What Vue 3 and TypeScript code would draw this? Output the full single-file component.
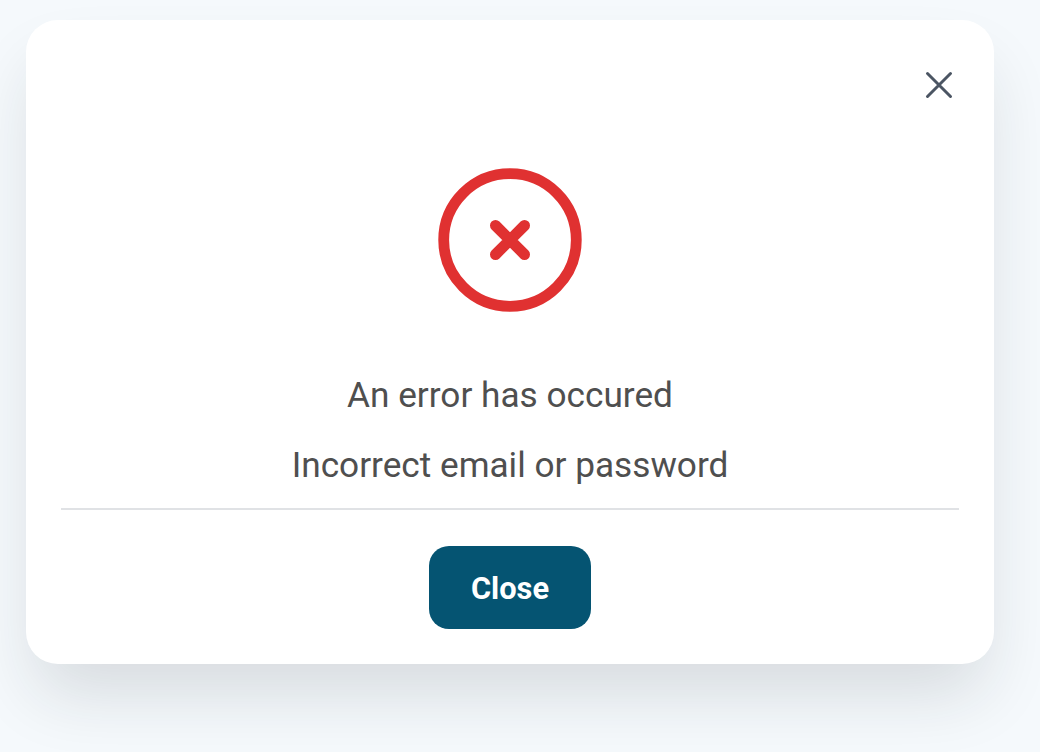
<script setup lang="ts">
const title: string = 'An error has occured'
const message: string = 'Incorrect email or password'
</script>

<template>
  <div class="page">
    <div class="card">
      <div class="top">
        <button class="x" aria-label="Close">
          <svg width="32" height="32" viewBox="0 0 32 32" fill="none">
            <path d="M4.5 4.5L27.5 27.5M27.5 4.5L4.5 27.5" stroke="#4b5563" stroke-width="3" stroke-linecap="round" />
          </svg>
        </button>
      </div>
      <svg class="icon" width="144" height="144" viewBox="0 0 144 144" fill="none">
        <circle cx="72" cy="72" r="66.3" stroke="#e03131" stroke-width="10.8" />
        <path d="M57.5 57.5L86.5 86.5M86.5 57.5L57.5 86.5" stroke="#e03131" stroke-width="11" stroke-linecap="round" />
      </svg>
      <p class="line first">{{ title }}</p>
      <p class="line second">{{ message }}</p>
      <div class="rule"></div>
      <button class="close">Close</button>
    </div>
  </div>
</template>

<style scoped>
.page {
  width: 1040px;
  height: 752px;
  box-sizing: border-box;
  padding: 20px 46px 0 26px;
  background: #f5f9fc;
  overflow: hidden;
}
.card {
  width: 968px;
  height: 644px;
  box-sizing: border-box;
  padding: 0 35px;
  background: #fff;
  border-radius: 32px;
  box-shadow: 0 38px 68px -10px rgba(30, 35, 40, 0.14);
  display: flex;
  flex-direction: column;
  align-items: center;
  font-family: Roboto, sans-serif;
}
.top {
  align-self: stretch;
  display: flex;
  justify-content: flex-end;
  padding-top: 49px;
}
.x {
  width: 32px;
  height: 32px;
  padding: 0;
  margin-right: 4.5px;
  border: 0;
  background: none;
  display: flex;
}
.icon {
  margin-top: 67px;
  flex: none;
}
.line {
  margin: 0;
  font-size: 35.2px;
  line-height: 48px;
  color: #4f4f4f;
  text-align: center;
}
.first {
  margin-top: 59px;
}
.second {
  margin-top: 22px;
}
.rule {
  align-self: stretch;
  height: 2px;
  margin-top: 19px;
  background: #e0e2e5;
  flex: none;
}
.close {
  margin-top: 36px;
  width: 162px;
  height: 83px;
  padding: 2px 0 0;
  border: 0;
  border-radius: 20px;
  background: #055472;
  color: #fff;
  font-family: Roboto, sans-serif;
  font-weight: 700;
  font-size: 30.8px;
}
</style>
